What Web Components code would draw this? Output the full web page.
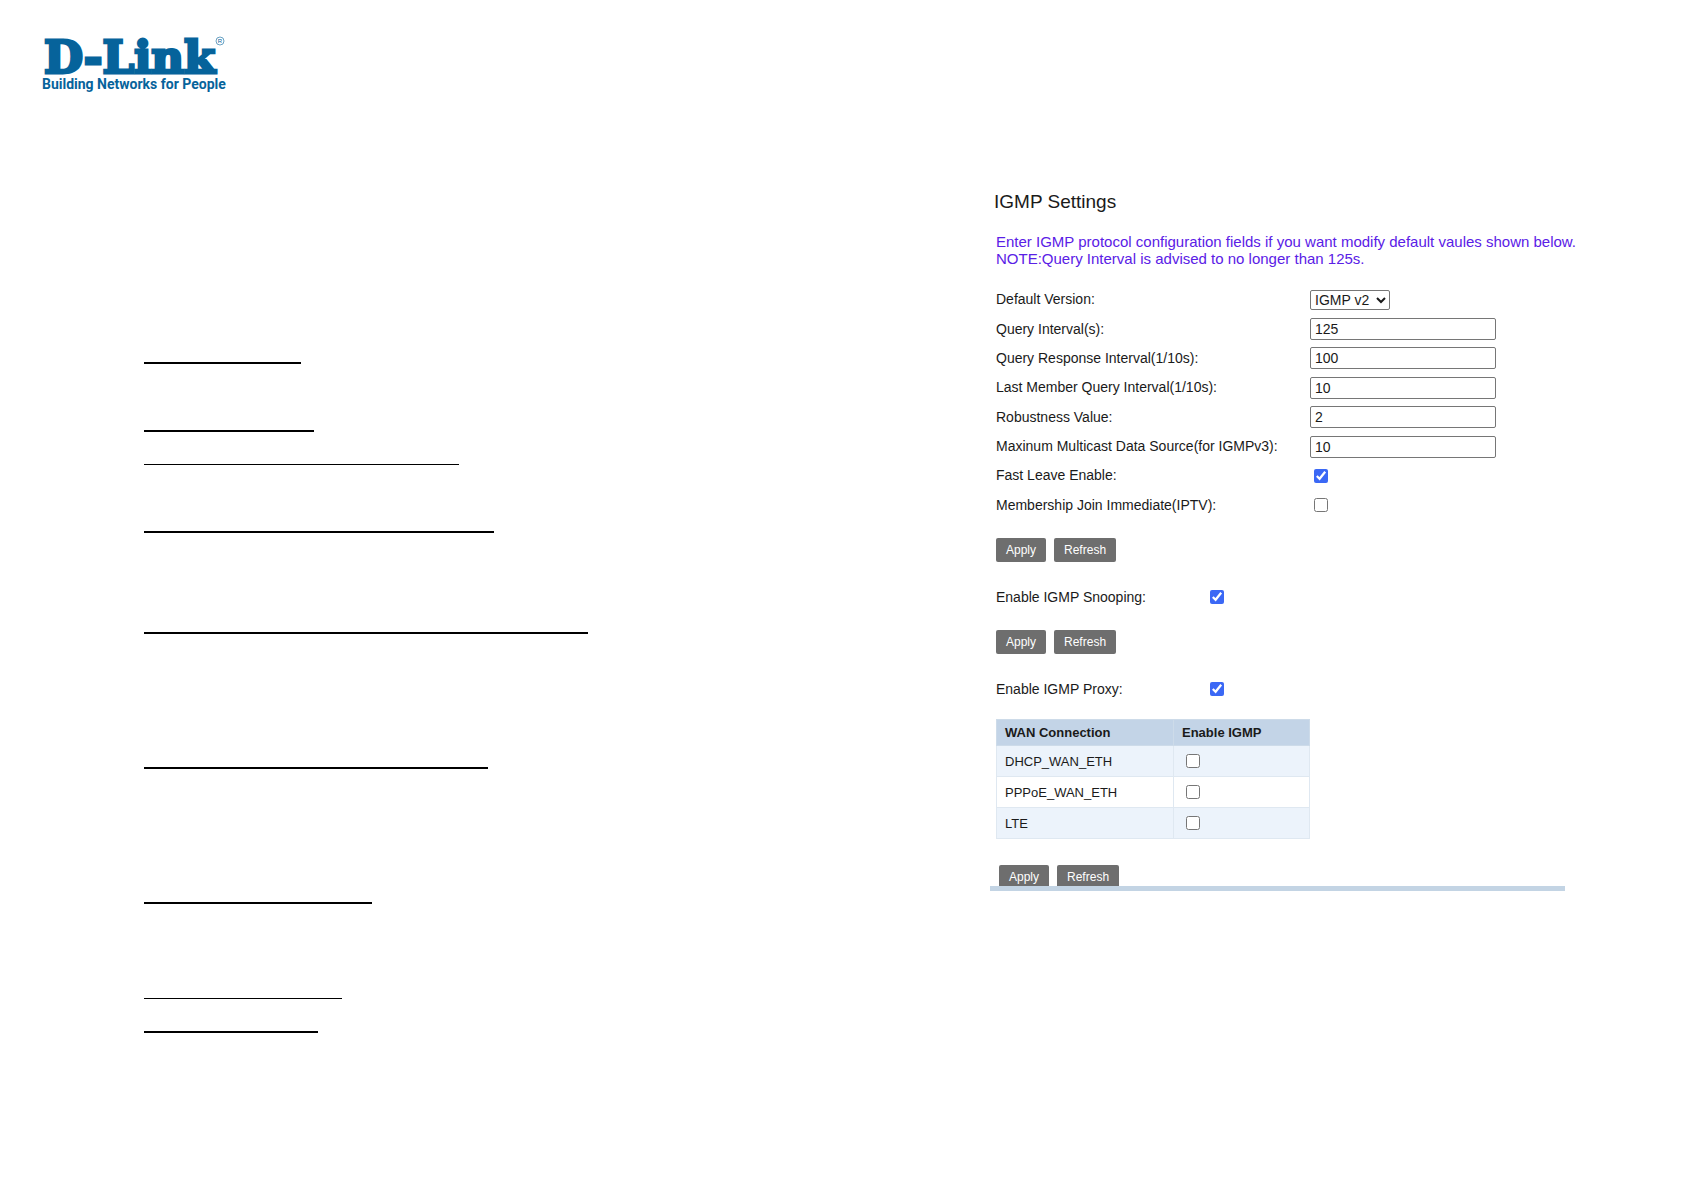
<!DOCTYPE html>
<html lang="en">
<head>
<meta charset="utf-8">
<title>IGMP Settings</title>
<style>
  body {
    margin: 0;
    background: #fff;
    color: #1a1a1a;
    font-family: "Liberation Sans", Arial, sans-serif;
    font-size: 14px;
    line-height: 17px;
  }
</style>
</head>
<body>
<manual-page>
  <dlink-logo slot="logo"></dlink-logo>
  <rule-list slot="notes"></rule-list>
  <igmp-panel slot="panel"></igmp-panel>
</manual-page>

<script>
// ========================================
// PAGE SHELL
// ========================================
class ManualPage extends HTMLElement {
  constructor() {
    super();
    this.attachShadow({ mode: 'open' });
    this.shadowRoot.innerHTML = `
      <style>
        :host {
          display: block;
        }
        header {
          padding: 36px 42px 0;
        }
        main {
          display: grid;
          grid-template-columns: minmax(0, 1fr) minmax(0, 575px);
          padding: 94px 119px 0 144px;
        }
      </style>
      <header><slot name="logo"></slot></header>
      <main>
        <slot name="notes"></slot>
        <slot name="panel"></slot>
      </main>
    `;
  }
}

// ========================================
// LOGO
// ========================================
class DlinkLogo extends HTMLElement {
  constructor() {
    super();
    this.attachShadow({ mode: 'open' });
    this.shadowRoot.innerHTML = `
      <style>
        :host {
          display: block;
        }
        svg {
          display: block;
          overflow: visible;
        }
        .name {
          font: 700 45px "DejaVu Serif", serif;
          stroke: #06639b;
          stroke-width: 3px;
        }
        .tagline {
          font: 700 14px Roboto, sans-serif;
        }
        .mark {
          font: 400 6px "Liberation Sans", sans-serif;
        }
      </style>
      <svg width="184" height="60" viewBox="0 0 184 60" fill="#06639b" role="img" aria-label="D-Link">
        <text class="name" x="2" y="37">D-Link</text>
        <text class="tagline" x="0" y="53">Building Networks for People</text>
        <circle cx="178" cy="5" r="4" fill="none" stroke="#06639b" stroke-width="0.6"/>
        <text class="mark" x="178" y="7" text-anchor="middle">R</text>
      </svg>
    `;
  }
}

// ========================================
// RULES
// ========================================
// gap is the blank space above each rule
const RULES = [
  { gap: 172, width: 157, weight: 2 },
  { gap: 66, width: 170, weight: 2 },
  { gap: 32, width: 315, weight: 1 },
  { gap: 66, width: 350, weight: 2 },
  { gap: 99, width: 444, weight: 2 },
  { gap: 133, width: 344, weight: 2 },
  { gap: 133, width: 228, weight: 2 },
  { gap: 94, width: 198, weight: 1 },
  { gap: 32, width: 174, weight: 2 }
];

class RuleList extends HTMLElement {
  constructor() {
    super();
    this.attachShadow({ mode: 'open' });
    this.shadowRoot.innerHTML = `
      <style>
        :host {
          display: block;
        }
        hr {
          margin: 0;
          border: 0;
          max-width: 100%;
          background: #000;
        }
      </style>
      ${RULES.map(r => `<hr style="margin-top:${r.gap}px;width:${r.width}px;height:${r.weight}px">`).join('')}
    `;
  }
}

// ========================================
// FORM ROW
// ========================================
// Usage: <igmp-field label="Query Interval(s):" type="text" value="125"></igmp-field>
class IgmpField extends HTMLElement {
  constructor() {
    super();
    this.attachShadow({ mode: 'open' });
  }

  connectedCallback() {
    const label = this.getAttribute('label');
    const type = this.getAttribute('type') || 'text';
    const value = this.getAttribute('value') || '';

    let control = `<input id="control" type="text" value="${value}">`;
    if (type === 'select') {
      control = `<select id="control"><option>IGMP v1</option><option selected>${value}</option><option>IGMP v3</option></select>`;
    } else if (type === 'checkbox') {
      control = `<input id="control" type="checkbox" ${this.hasAttribute('checked') ? 'checked' : ''}>`;
    }

    this.shadowRoot.innerHTML = `
      <style>
        :host {
          display: grid;
          grid-template-columns: var(--label-width, 314px) 1fr;
          align-items: center;
          justify-items: start;
        }
        label {
          white-space: nowrap;
        }
        input[type="text"],
        select {
          box-sizing: border-box;
          margin: 0;
          border: 1px solid #767676;
          border-radius: 2px;
          background: #fff;
          color: #1a1a1a;
          font: inherit;
        }
        input[type="text"] {
          width: 186px;
          height: 22px;
          padding: 1px 4px;
        }
        select {
          width: 80px;
          height: 20px;
          padding: 0;
        }
        input[type="checkbox"] {
          width: 14px;
          height: 14px;
          margin: 0 4px;
          accent-color: #3b68f5;
        }
      </style>
      <label for="control">${label}</label>
      ${control}
    `;
  }
}

// ========================================
// APPLY / REFRESH
// ========================================
class IgmpActions extends HTMLElement {
  constructor() {
    super();
    this.attachShadow({ mode: 'open' });
    this.shadowRoot.innerHTML = `
      <style>
        :host {
          display: flex;
          gap: 8px;
        }
        button {
          height: 24px;
          padding: 0 10px;
          border: 0;
          border-radius: 2px;
          background: #6e6e6e;
          color: #fff;
          font: inherit;
          font-size: 12px;
        }
      </style>
      <button type="button">Apply</button>
      <button type="button">Refresh</button>
    `;
  }
}

// ========================================
// WAN TABLE
// ========================================
class WanTable extends HTMLElement {
  constructor() {
    super();
    this.attachShadow({ mode: 'open' });
    const names = ['DHCP_WAN_ETH', 'PPPoE_WAN_ETH', 'LTE'];
    this.shadowRoot.innerHTML = `
      <style>
        :host {
          display: block;
        }
        table {
          width: 314px;
          border-collapse: collapse;
          font-size: 13px;
        }
        th,
        td {
          box-sizing: border-box;
          height: 31px;
          padding: 0 8px;
          border: 1px solid #dfe8f1;
          text-align: left;
        }
        th {
          height: 26px;
          background: #c3d4e7;
          border-color: #cddbe9;
        }
        th:first-child {
          width: 177px;
        }
        tbody tr:nth-child(odd) {
          background: #ecf3fb;
        }
        input {
          display: block;
          width: 14px;
          height: 14px;
          margin: 0 4px;
        }
      </style>
      <table>
        <thead>
          <tr><th>WAN Connection</th><th>Enable IGMP</th></tr>
        </thead>
        <tbody>
          ${names.map((name, i) => `
            <tr>
              <td><label for="wan${i}">${name}</label></td>
              <td><input id="wan${i}" type="checkbox"></td>
            </tr>
          `).join('')}
        </tbody>
      </table>
    `;
  }
}

// ========================================
// SETTINGS PANEL
// ========================================
class IgmpPanel extends HTMLElement {
  constructor() {
    super();
    this.attachShadow({ mode: 'open' });
    this.shadowRoot.innerHTML = `
      <style>
        :host {
          display: block;
        }
        h1 {
          margin: 0 0 19px;
          padding-left: 4px;
          font-size: 19px;
          font-weight: 400;
          line-height: 24px;
        }
        .body {
          padding-left: 6px;
        }
        p {
          margin: 0 0 18px;
          color: #5a20e6;
          font-size: 15px;
          white-space: nowrap;
        }
        .fields {
          display: grid;
          grid-auto-rows: 1fr;
          min-height: 235px;
          margin-bottom: 18px;
        }
        .body igmp-actions {
          margin: 16px 0 18px;
        }
        .toggle {
          --label-width: 210px;
          height: 34px;
        }
        wan-table {
          margin-top: 13px;
        }
        /* the bottom bar cuts through the last pair of buttons */
        footer {
          height: 21px;
          margin-top: 26px;
          padding-left: 9px;
          border-bottom: 5px solid #c3d4e4;
          overflow: hidden;
        }
      </style>
      <h1>IGMP Settings</h1>
      <div class="body">
        <p>Enter IGMP protocol configuration fields if you want modify default vaules shown below.<br>NOTE:Query Interval is advised to no longer than 125s.</p>
        <div class="fields">
          <igmp-field label="Default Version:" type="select" value="IGMP v2"></igmp-field>
          <igmp-field label="Query Interval(s):" value="125"></igmp-field>
          <igmp-field label="Query Response Interval(1/10s):" value="100"></igmp-field>
          <igmp-field label="Last Member Query Interval(1/10s):" value="10"></igmp-field>
          <igmp-field label="Robustness Value:" value="2"></igmp-field>
          <igmp-field label="Maxinum Multicast Data Source(for IGMPv3):" value="10"></igmp-field>
          <igmp-field label="Fast Leave Enable:" type="checkbox" checked></igmp-field>
          <igmp-field label="Membership Join Immediate(IPTV):" type="checkbox"></igmp-field>
        </div>
        <igmp-actions></igmp-actions>
        <igmp-field class="toggle" label="Enable IGMP Snooping:" type="checkbox" checked></igmp-field>
        <igmp-actions></igmp-actions>
        <igmp-field class="toggle" label="Enable IGMP Proxy:" type="checkbox" checked></igmp-field>
        <wan-table></wan-table>
      </div>
      <footer><igmp-actions></igmp-actions></footer>
    `;
  }
}

customElements.define('manual-page', ManualPage);
customElements.define('dlink-logo', DlinkLogo);
customElements.define('rule-list', RuleList);
customElements.define('igmp-field', IgmpField);
customElements.define('igmp-actions', IgmpActions);
customElements.define('wan-table', WanTable);
customElements.define('igmp-panel', IgmpPanel);
</script>
</body>
</html>
